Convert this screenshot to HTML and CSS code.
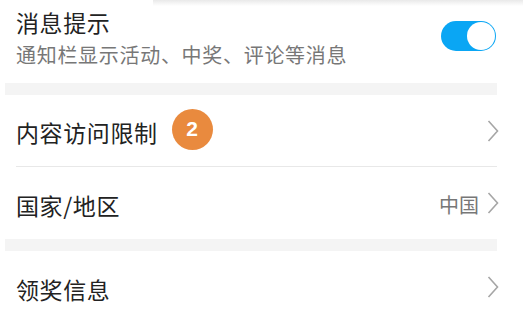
FILE: index.html
```html
<!DOCTYPE html>
<html lang="zh">
<head>
<meta charset="utf-8">
<link rel="stylesheet" href="styles.css">
</head>
<body>
<div class="page">
  <div class="top-shadow"></div>
  <section class="notify">
    <div class="notify-text">
      <div class="title">消息提示</div>
      <div class="subtitle">通知栏显示活动、中奖、评论等消息</div>
    </div>
    <div class="toggle"><span class="knob"></span></div>
  </section>
  <div class="band"></div>
  <div class="group">
    <div class="row row-divided">
      <span class="label">内容访问限制</span>
      <span class="badge">2</span>
      <span class="spacer"></span>
      <svg class="chev" viewBox="0 0 12 22" width="12" height="22"><polyline points="1.5,1 10.5,11 1.5,21" fill="none" stroke="#a6a6a6" stroke-width="1.6"/></svg>
    </div>
    <div class="row">
      <span class="label">国家/地区</span>
      <span class="spacer"></span>
      <span class="value">中国</span>
      <svg class="chev" viewBox="0 0 12 22" width="12" height="22"><polyline points="1.5,1 10.5,11 1.5,21" fill="none" stroke="#a6a6a6" stroke-width="1.6"/></svg>
    </div>
  </div>
  <div class="band"></div>
  <div class="group">
    <div class="row">
      <span class="label">领奖信息</span>
      <span class="spacer"></span>
      <svg class="chev" viewBox="0 0 12 22" width="12" height="22"><polyline points="1.5,1 10.5,11 1.5,21" fill="none" stroke="#a6a6a6" stroke-width="1.6"/></svg>
    </div>
  </div>
</div>
</body>
</html>
```

FILE: styles.css
```css
html, body {
  margin: 0;
  padding: 0;
  background: #ffffff;
}

body {
  font-family: "Noto Sans CJK SC", "Noto Sans", sans-serif;
  color: #222222;
  width: 523px;
  height: 314px;
  overflow: hidden;
}

.page {
  position: relative;
  width: 523px;
}

.top-shadow {
  position: absolute;
  top: 0;
  left: 153px;
  right: 0;
  height: 6px;
  background: linear-gradient(to bottom, #e9e9e9, rgba(255,255,255,0));
}

.notify {
  box-sizing: border-box;
  height: 83px;
  display: flex;
  align-items: flex-start;
  padding: 7px 27px 0 16px;
}

.notify-text {
  flex: 1;
}

.title {
  font-size: 23px;
  line-height: 30px;
  letter-spacing: 0.6px;
  color: #222222;
}

.subtitle {
  margin-top: 4px;
  font-size: 20px;
  line-height: 28px;
  letter-spacing: 0.7px;
  color: #777777;
}

.toggle {
  margin-top: 14px;
  width: 55px;
  height: 30px;
  border-radius: 15px;
  background: #0aa6f4;
  display: flex;
  align-items: center;
  justify-content: flex-end;
  padding-right: 1px;
  box-sizing: border-box;
}

.knob {
  width: 28px;
  height: 28px;
  border-radius: 50%;
  background: #ffffff;
}

.band {
  margin-left: 5px;
  width: 492px;
  height: 12px;
  background: #f4f4f4;
}

.group {
  margin-left: 16px;
  width: 481px;
}

.row {
  height: 72px;
  display: flex;
  align-items: center;
  box-sizing: border-box;
}

.row-divided {
  height: 72px;
  border-bottom: 1px solid #e8e8e8;
}

.label {
  font-size: 23px;
  line-height: 30px;
  letter-spacing: 0.6px;
  color: #222222;
  padding-top: 3px;
}

.badge {
  margin-left: 14px;
  width: 41px;
  height: 41px;
  border-radius: 50%;
  background: #e98a3e;
  color: #ffffff;
  font-family: "Liberation Sans", "Noto Sans", sans-serif;
  font-weight: bold;
  font-size: 21px;
  display: flex;
  align-items: center;
  justify-content: center;
  margin-top: -3px;
}

.spacer {
  flex: 1;
}

.value {
  font-size: 20px;
  line-height: 28px;
  color: #777777;
  margin-right: 8px;
  padding-top: 3px;
}

.chev {
  margin-right: -2px;
  display: block;
}
```
